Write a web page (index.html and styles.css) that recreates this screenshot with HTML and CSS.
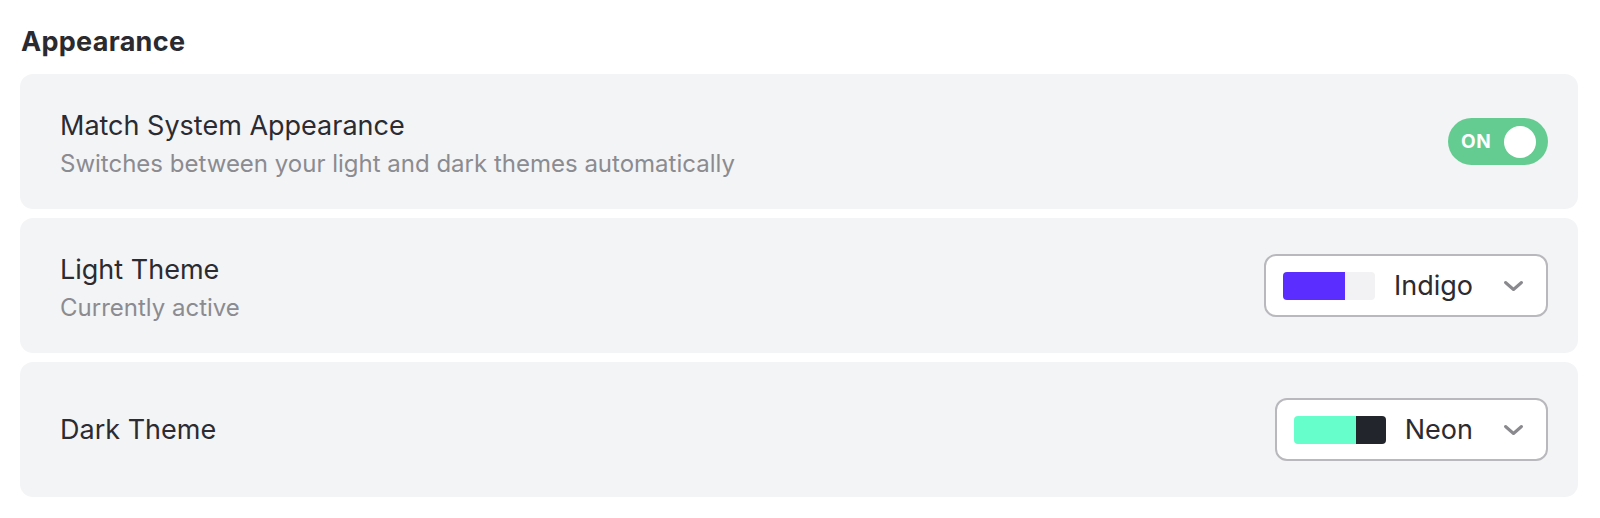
FILE: index.html
```html
<!DOCTYPE html>
<html lang="en">
<head>
<meta charset="utf-8">
<title>Appearance</title>
<link rel="stylesheet" href="styles.css">
</head>
<body>
<main class="settings">
  <h2 class="section-title">Appearance</h2>
  <div class="card-list">
    <section class="card">
      <div class="card-text">
        <div class="card-title">Match System Appearance</div>
        <div class="card-sub">Switches between your light and dark themes automatically</div>
      </div>
      <button class="toggle" type="button" aria-pressed="true">
        <span class="toggle-label">ON</span>
        <span class="toggle-knob"></span>
      </button>
    </section>
    <section class="card">
      <div class="card-text">
        <div class="card-title">Light Theme</div>
        <div class="card-sub">Currently active</div>
      </div>
      <div class="select">
        <span class="swatch"><span class="swatch-main indigo"></span><span class="swatch-alt light"></span></span>
        <span class="select-value">Indigo</span>
        <svg class="chevron" width="21" height="12" viewBox="0 0 21 12"><polyline points="2.5,2.5 10.5,9.5 18.5,2.5" fill="none" stroke="#8a8a8e" stroke-width="3" stroke-linecap="round" stroke-linejoin="round"/></svg>
      </div>
    </section>
    <section class="card">
      <div class="card-text single">
        <div class="card-title">Dark Theme</div>
      </div>
      <div class="select">
        <span class="swatch"><span class="swatch-main neon"></span><span class="swatch-alt dark"></span></span>
        <span class="select-value">Neon</span>
        <svg class="chevron" width="21" height="12" viewBox="0 0 21 12"><polyline points="2.5,2.5 10.5,9.5 18.5,2.5" fill="none" stroke="#8a8a8e" stroke-width="3" stroke-linecap="round" stroke-linejoin="round"/></svg>
      </div>
    </section>
  </div>
</main>
</body>
</html>
```

FILE: styles.css
```css
* { box-sizing: border-box; }

html, body {
  margin: 0;
  background: #ffffff;
}

body {
  font-family: Inter, "Noto Sans", "Liberation Sans", sans-serif;
  color: #2a2a30;
}

.settings {
  padding: 25px 22px 0 20px;
}

.section-title {
  margin: 0 0 16px 0;
  font-size: 27px;
  line-height: 33px;
  font-weight: 700;
  letter-spacing: 0.3px;
  color: #2a2a2f;
  padding-left: 1px;
}

.card-list {
  display: flex;
  flex-direction: column;
  gap: 9px;
}

.card {
  height: 135px;
  background: #f3f4f6;
  border-radius: 13px;
  display: flex;
  align-items: center;
  justify-content: space-between;
  padding: 0 30px 0 40px;
}

.card-text {
  display: flex;
  flex-direction: column;
  padding-top: 5px;
}

.card-text.single {
  padding-top: 0;
}

.card-title {
  font-size: 27px;
  line-height: 40px;
  color: #2b2b31;
}

.card-sub {
  font-size: 24px;
  line-height: 36px;
  color: #8b8b90;
}

.toggle {
  width: 100px;
  height: 47px;
  border: none;
  border-radius: 24px;
  background: #65cc91;
  display: flex;
  align-items: center;
  justify-content: space-between;
  padding: 0 12px 0 13px;
  cursor: pointer;
}

.toggle-label {
  font-family: Inter, "Noto Sans", sans-serif;
  font-weight: 700;
  font-size: 19px;
  color: #ffffff;
  letter-spacing: 0.6px;
}

.toggle-knob {
  width: 32px;
  height: 32px;
  border-radius: 50%;
  background: #ffffff;
}

.select {
  height: 63px;
  display: flex;
  align-items: center;
  background: #ffffff;
  border: 2px solid #b9b9bd;
  border-radius: 12px;
  padding: 0 22px 0 17px;
}

.swatch {
  display: flex;
  width: 92px;
  height: 28px;
  border-radius: 4px;
  overflow: hidden;
}

.swatch-main { width: 62px; }
.swatch-alt { width: 30px; }

.indigo { background: #5b2eff; }
.light { background: #f2f2f4; }
.neon { background: #66ffcc; }
.dark { background: #23252c; }

.select-value {
  margin-left: 19px;
  font-size: 27px;
  color: #2b2b31;
}

.chevron {
  margin-left: 30px;
  display: block;
}
```
